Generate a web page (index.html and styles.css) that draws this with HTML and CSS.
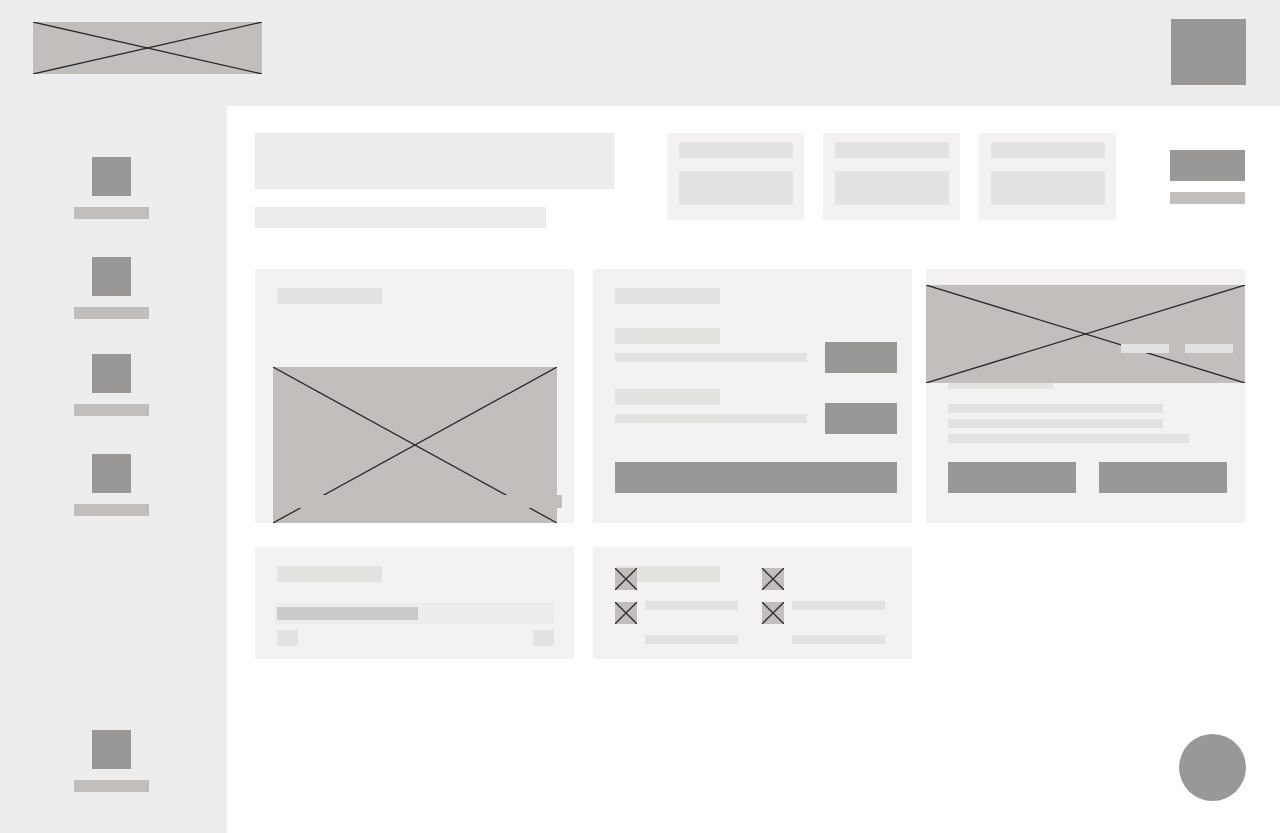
FILE: index.html
```html
<!DOCTYPE html>
<html lang="en">
<head>
<meta charset="utf-8">
<title>Dashboard wireframe</title>
<link rel="stylesheet" href="styles.css">
</head>
<body>
<header class="topbar">
  <div class="logo ph-img">
    <svg class="xsvg" viewBox="0 0 100 100" preserveAspectRatio="none"><line x1="0" y1="0" x2="100" y2="100"/><line x1="0" y1="100" x2="100" y2="0"/></svg>
  </div>
  <div class="avatar"></div>
</header>
<div class="layout">
  <nav class="sidebar">
    <div class="nav-item"><div class="nav-icon"></div><div class="nav-label"></div></div>
    <div class="nav-item"><div class="nav-icon"></div><div class="nav-label"></div></div>
    <div class="nav-item nav-tight"><div class="nav-icon"></div><div class="nav-label"></div></div>
    <div class="nav-item"><div class="nav-icon"></div><div class="nav-label"></div></div>
    <div class="nav-item nav-bottom"><div class="nav-icon"></div><div class="nav-label"></div></div>
  </nav>
  <main class="main">
    <section class="top">
      <div class="heading">
        <div class="h-title"></div>
        <div class="h-sub"></div>
      </div>
      <div class="stats">
        <div class="stat"><div class="stat-label"></div><div class="stat-value"></div></div>
        <div class="stat"><div class="stat-label"></div><div class="stat-value"></div></div>
        <div class="stat"><div class="stat-label"></div><div class="stat-value"></div></div>
      </div>
      <div class="actions">
        <div class="act-btn"></div>
        <div class="act-label"></div>
      </div>
    </section>

    <section class="row row-1">
      <div class="card card-a">
        <div class="c-title"></div>
        <div class="a-img ph-img">
          <svg class="xsvg" viewBox="0 0 100 100" preserveAspectRatio="none"><line x1="0" y1="0" x2="100" y2="100"/><line x1="0" y1="100" x2="100" y2="0"/></svg>
          <div class="a-caption"></div>
        </div>
      </div>
      <div class="card card-b">
        <div class="b-title"></div>
        <div class="b-group">
          <div class="b-text"><div class="b-sub"></div><div class="b-line"></div></div>
          <div class="b-btn"></div>
        </div>
        <div class="b-group b-group-2">
          <div class="b-text"><div class="b-sub"></div><div class="b-line"></div></div>
          <div class="b-btn"></div>
        </div>
        <div class="b-wide"></div>
      </div>
      <div class="card card-c">
        <div class="c-img ph-img">
          <svg class="xsvg" viewBox="0 0 100 100" preserveAspectRatio="none"><line x1="0" y1="0" x2="100" y2="100"/><line x1="0" y1="100" x2="100" y2="0"/></svg>
          <div class="c-tag c-tag-1"></div>
          <div class="c-tag c-tag-2"></div>
        </div>
        <div class="c-body">
          <div class="c-head"></div>
          <div class="c-line"></div>
          <div class="c-line c-line-2"></div>
          <div class="c-line c-line-long"></div>
          <div class="c-btns"><div class="c-btn"></div><div class="c-btn"></div></div>
        </div>
      </div>
    </section>

    <section class="row row-2">
      <div class="card card-d">
        <div class="c-title"></div>
        <div class="track"><div class="fill" style="width:141px"></div></div>
        <div class="d-ends"><div class="d-box"></div><div class="d-box"></div></div>
      </div>
      <div class="card card-e">
        <div class="e-col">
          <div class="e-row-a">
            <div class="e-title"></div>
            <div class="e-icon e-icon-over ph-img"><svg class="xsvg" viewBox="0 0 100 100" preserveAspectRatio="none"><line x1="0" y1="0" x2="100" y2="100"/><line x1="0" y1="100" x2="100" y2="0"/></svg></div>
          </div>
          <div class="e-row-b">
            <div class="e-icon ph-img"><svg class="xsvg" viewBox="0 0 100 100" preserveAspectRatio="none"><line x1="0" y1="0" x2="100" y2="100"/><line x1="0" y1="100" x2="100" y2="0"/></svg></div>
            <div class="e-line"></div>
          </div>
          <div class="e-row-c"><div class="e-line"></div></div>
        </div>
        <div class="e-col">
          <div class="e-row-a">
            <div class="e-icon e-icon-top ph-img"><svg class="xsvg" viewBox="0 0 100 100" preserveAspectRatio="none"><line x1="0" y1="0" x2="100" y2="100"/><line x1="0" y1="100" x2="100" y2="0"/></svg></div>
          </div>
          <div class="e-row-b">
            <div class="e-icon ph-img"><svg class="xsvg" viewBox="0 0 100 100" preserveAspectRatio="none"><line x1="0" y1="0" x2="100" y2="100"/><line x1="0" y1="100" x2="100" y2="0"/></svg></div>
            <div class="e-line"></div>
          </div>
          <div class="e-row-c"><div class="e-line"></div></div>
        </div>
      </div>
    </section>
  </main>
</div>
<div class="fab"></div>
</body>
</html>
```
FILE: styles.css
```css
* { box-sizing: border-box; }
html, body { margin: 0; padding: 0; height: 833px; overflow: hidden; }
body {
  font-family: "Liberation Sans", Arial, sans-serif;
  background: #ffffff;
  display: flex;
  flex-direction: column;
}

.ph-img { background: #c1bebc; position: relative; }
.xsvg { position: absolute; left: 0; top: 0; width: 100%; height: 100%; display: block; }
.xsvg line { stroke: #2a2a2a; stroke-width: 1.3; vector-effect: non-scaling-stroke; }

/* header */
.topbar {
  height: 106px;
  flex: none;
  background: #ededed;
  display: flex;
  justify-content: space-between;
  align-items: flex-start;
  padding: 22px 34px 0 33px;
}
.logo { width: 229px; height: 52px; }
.avatar { width: 75px; height: 66px; background: #999896; margin-top: -3px; }

.layout { flex: 1; display: flex; min-height: 0; }

/* sidebar */
.sidebar {
  width: 227px;
  flex: none;
  background: #ededed;
  display: flex;
  flex-direction: column;
  align-items: center;
  padding: 51px 4px 41px 0;
  gap: 38px;
}
.nav-item { display: flex; flex-direction: column; align-items: center; gap: 11px; }
.nav-tight { margin-top: -3px; }
.nav-bottom { margin-top: auto; }
.nav-icon { width: 39px; height: 39px; background: #999896; }
.nav-label { width: 75px; height: 12px; background: #c1bebc; }

/* main */
.main { flex: 1; padding: 27px 35px 0 28px; }

.top { display: flex; align-items: flex-start; margin-bottom: 41px; }
.heading { width: 359px; display: flex; flex-direction: column; gap: 18px; }
.h-title { height: 56px; background: #ededed; border: 1px solid #e9e9e9; }
.h-sub { width: 291px; height: 21px; background: #ededed; border: 1px solid #e9e9e9; }

.stats { display: flex; gap: 19px; margin-left: 53px; }
.stat {
  width: 137px;
  height: 87px;
  background: #f3f1f2;
  padding: 9px 11px 0 12px;
  display: flex;
  flex-direction: column;
  gap: 13px;
}
.stat-label { height: 16px; background: #e3e2e0; }
.stat-value { height: 34px; background: #e3e2e0; }

.actions { margin-left: auto; margin-top: 17px; display: flex; flex-direction: column; gap: 11px; }
.act-btn { width: 75px; height: 31px; background: #999896; }
.act-label { width: 75px; height: 12px; background: #c1bebc; }

/* cards */
.row { display: flex; gap: 19px; }
.row-1 { height: 254px; margin-bottom: 24px; }
.row-2 { height: 112px; }
.card { width: 319px; flex: none; background: #f3f1f2; }
.card-c { margin-left: -5px; }

.c-title { width: 105px; height: 16px; background: #e3e2e0; }

.card-a { padding: 19px 17px 0 18px; display: flex; flex-direction: column; }
.card-a .c-title { margin-left: 4px; }
.a-img { height: 156px; margin-top: 63px; }
.a-caption {
  position: absolute;
  left: 24px;
  top: 128px;
  width: 265px;
  height: 13px;
  background: #c1bebc;
}

.card-b { padding: 19px 15px 0 22px; display: flex; flex-direction: column; }
.b-title { width: 105px; height: 16px; background: #e3e2e0; }
.b-group { display: flex; align-items: flex-start; margin-top: 24px; }
.b-group-2 { margin-top: 16px; }
.b-text { display: flex; flex-direction: column; gap: 9px; }
.b-sub { width: 105px; height: 16px; background: #e3e2e0; }
.b-line { width: 192px; height: 9px; background: #e3e2e0; }
.b-btn { width: 72px; height: 31px; background: #999896; margin-left: auto; margin-top: 14px; }
.b-wide { height: 31px; background: #999896; margin-top: 28px; }

.card-c { padding-top: 16px; }
.c-img { height: 98px; }
.c-tag { position: absolute; top: 59px; width: 48px; height: 9px; background: #e3e2e0; }
.c-tag-1 { left: 195px; }
.c-tag-2 { left: 259px; }
.c-body { padding: 0 18px 0 22px; display: flex; flex-direction: column; }
.c-head { width: 105px; height: 6px; background: #e3e2e0; }
.c-line { width: 215px; height: 9px; background: #e3e2e0; margin-top: 15px; }
.c-line-2 { margin-top: 6px; }
.c-line-long { width: 241px; margin-top: 6px; }
.c-btns { display: flex; justify-content: space-between; margin-top: 19px; }
.c-btn { width: 128px; height: 31px; background: #999896; }

.card-d { padding: 19px 20px 0 22px; display: flex; flex-direction: column; }
.track {
  height: 21px;
  margin: 21px 0 0 -2px;
  background: #ededed;
  border: 1px solid #e9e9e9;
  padding: 3px 0 0 1px;
}
.fill { height: 13px; background: #cccbc9; }
.d-ends { display: flex; justify-content: space-between; margin-top: 6px; }
.d-box { width: 21px; height: 16px; background: #e3e2e0; }

.card-e { padding: 19px 0 0 22px; display: flex; }
.e-col { width: 147px; display: flex; flex-direction: column; }
.e-row-a { height: 24px; position: relative; }
.e-title { width: 105px; height: 16px; background: #e3e2e0; }
.e-icon { width: 22px; height: 22px; flex: none; }
.e-icon-over { position: absolute; left: 0; top: 2px; }
.e-icon-top { margin-top: 2px; }
.e-row-b { display: flex; align-items: flex-start; margin-top: 11px; height: 23px; }
.e-row-b .e-icon { margin-top: 1px; }
.e-line { width: 93px; height: 9px; background: #e3e2e0; margin-left: 8px; }
.e-row-c { margin-top: 11px; padding-left: 22px; }

/* floating action button */
.fab {
  position: fixed;
  right: 34px;
  bottom: 32px;
  width: 67px;
  height: 67px;
  border-radius: 50%;
  background: #999896;
}
```
